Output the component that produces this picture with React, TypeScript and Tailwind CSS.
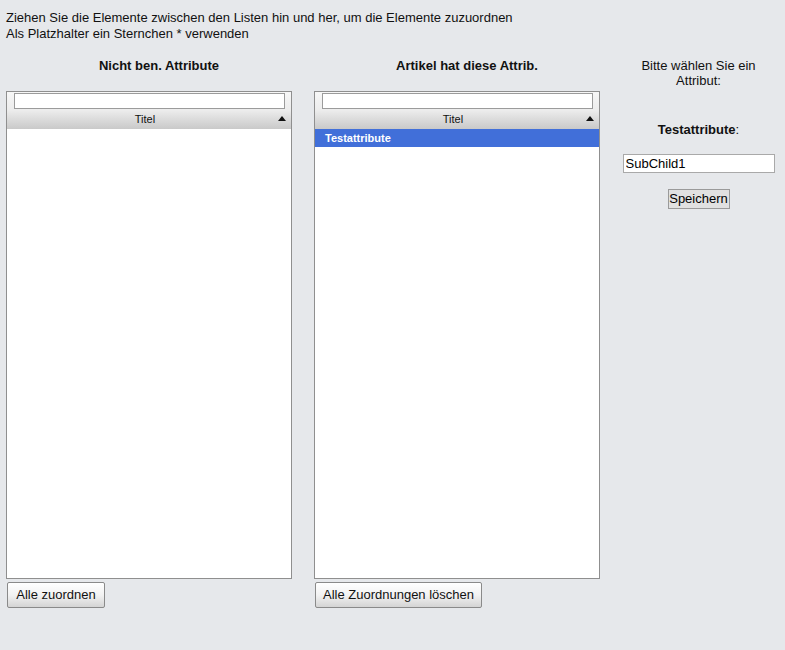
export default function App() {
  const font = { fontFamily: '"Liberation Sans", Arial, sans-serif' };
  return (
    <div
      className="min-h-[650px] w-[785px] bg-[#e6e8eb] text-[13px] leading-[16px] text-[#111]"
      style={font}
    >
      <div className="px-[6px] pt-[10px]">
        <p>Ziehen Sie die Elemente zwischen den Listen hin und her, um die Elemente zuzuordnen</p>
        <p>Als Platzhalter ein Sternchen * verwenden</p>
      </div>

      <div className="mt-[16px] flex pl-[6px]">
        <ListColumn title="Nicht ben. Attribute" button="Alle zuordnen" buttonWidth="w-[98px]" />
        <div className="w-[22px]" />
        <ListColumn
          title="Artikel hat diese Attrib."
          button="Alle Zuordnungen löschen"
          buttonWidth="w-[167px]"
          items={["Testattribute"]}
        />

        {/* detail panel */}
        <div className="ml-[12px] flex w-[173px] flex-col items-center">
          <p className="text-center leading-[15px]">
            Bitte wählen Sie ein
            <br />
            Attribut:
          </p>
          <p className="mt-[34px]">
            <b>Testattribute</b>:
          </p>
          <input
            readOnly
            value="SubChild1"
            className="mt-[16px] h-[19px] w-[152px] border border-[#a9a9a9] bg-white px-[2px] text-[13px] text-black outline-none"
            style={font}
          />
          <button
            className="mt-[16px] h-[20px] w-[62px] border border-[#9a9a9a] bg-[#e1e1e1] text-[13px] leading-[16px] text-black"
            style={font}
          >
            Speichern
          </button>
        </div>
      </div>
    </div>
  );
}

function ListColumn({
  title,
  button,
  buttonWidth,
  items = [],
}: {
  title: string;
  button: string;
  buttonWidth: string;
  items?: string[];
}) {
  return (
    <div className="flex w-[286px] flex-col">
      <h2 className="h-[33px] pl-[20px] text-center text-[13px] font-bold leading-[16px]">{title}</h2>
      <div className="h-[488px] border border-[#8f8f8f] bg-white">
        <div className="bg-gradient-to-b from-[#f7f7f7] via-[#ececec] to-[#c9c9c9] pt-[1px]">
          <div className="pl-[7px] pr-[6px]">
            <div className="h-[16px] border border-[#9b9b9b] bg-white" />
          </div>
          <div className="relative flex h-[20px] items-center justify-center pr-[8px] text-[11px] text-[#111]">
            Titel
            <svg
              className="absolute right-[5px] top-[7px]"
              width="8"
              height="5"
              viewBox="0 0 8 5"
            >
              <path d="M0 5 L4 0 L8 5 Z" fill="#111" />
            </svg>
          </div>
        </div>
        {items.map((it) => (
          <div
            key={it}
            className="flex h-[18px] items-center bg-[#416fd9] pl-[10px] text-[11px] font-bold text-white"
          >
            {it}
          </div>
        ))}
      </div>
      <button
        className={`mt-[3px] h-[26px] ${buttonWidth} ml-[1px] rounded-[2px] border border-[#8a8a8a] bg-gradient-to-b from-white via-[#f2f2f2] to-[#d4d4d4] text-[13px] text-[#111]`}
        style={{ fontFamily: '"Liberation Sans", Arial, sans-serif' }}
      >
        {button}
      </button>
    </div>
  );
}
